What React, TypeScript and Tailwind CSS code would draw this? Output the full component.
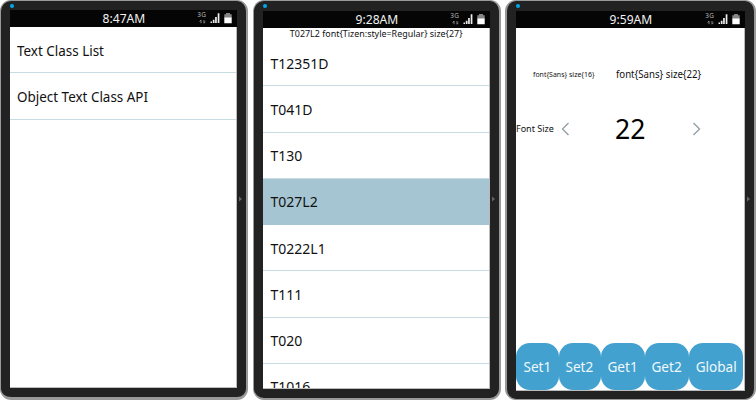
import type { ReactNode } from 'react';

function StatusBar({ time }: { time: string }) {
  return (
    <div className="relative flex h-[17px] shrink-0 items-center justify-center bg-[#050505] text-[#f2f2f2]">
      <span className="text-[13px] leading-[17px]"><span className="inline-block origin-center scale-x-[0.93]">{time}</span></span>
      <svg className="absolute top-0 right-0" width="42" height="17" viewBox="0 0 42 17">
        <text x="2.2" y="7.4" fontSize="6.4" letterSpacing="0.4" fill="#b8b8b8">3G</text>
        <path d="M6 10v3.200M4.600 11.500L6 10M9 10v3.200M10.400 11.700L9 13.200" stroke="#888" strokeWidth="1" fill="none" />
        <path d="M15.500 11.500h1.500V13h-1.500zM17.800 9.800h1.700V13h-1.700zM20.100 7h1.700v6h-1.700zM22.700 3.200h1.700V13h-1.700z" fill="#eee" />
        <path d="M31 3h4v1.200h1.700V8h-7.400V4.200H31z" fill="#858585" />
        <path d="M29.300 7.500h7.400v5.800h-7.400z" fill="#fff" />
      </svg>
    </div>
  );
}

function Phone({ frame, time, children }: { frame: string; time: string; children: ReactNode }) {
  return (
    <section className={`relative flex shrink-0 flex-col overflow-hidden border-[#999] bg-[#222] ${frame}`}>
      <i className="absolute top-[3px] left-[9px] size-1 rounded-full bg-[#00a8ed]" />
      <StatusBar time={time} />
      <div className="flex min-h-0 flex-1 flex-col overflow-hidden border-r border-b border-[#bbb] bg-white">{children}</div>
      <svg className="absolute top-[194px] right-[3px]" width="4" height="8" viewBox="0 0 4 8">
        <path d="M0 1.500L3 4L0 6.500z" fill="#666" />
      </svg>
    </section>
  );
}

function Row({ label, selected = false, fit }: { label: string; selected?: boolean; fit: string }) {
  return (
    <div className={`flex h-[46.25px] shrink-0 items-center border-b pt-px ${selected ? 'border-[#a6c5d2] bg-[#a6c5d2]' : 'border-[#c8dbe3]'}`}>
      <span className={`origin-left text-[14px] whitespace-nowrap ${fit}`}>{label}</span>
    </div>
  );
}

const devices = ['T12351D', 'T041D', 'T130', 'T027L2', 'T0222L1', 'T111', 'T020', 'T1016'];

const buttons = [
  { label: 'Set1', width: 'w-[42.500px]' },
  { label: 'Set2', width: 'w-[42.500px]' },
  { label: 'Get1', width: 'w-[44px]' },
  { label: 'Get2', width: 'w-[44px]' },
  { label: 'Global', width: 'w-[54px]' },
];

export default function App() {
  return (
    <main className="flex h-[400px] w-[756px] items-start overflow-hidden bg-white font-['Noto_Sans',sans-serif] text-[#111]">
      <Phone time="8:47AM" frame="h-[400px] w-[248px] rounded-[11px] border-t border-l border-r-2 border-b-[3px] pt-[9px] pr-[9px] pb-[9px] pl-[9px]">
        <Row label="Text Class List" fit="ml-[7px] scale-x-[0.96]" />
        <Row label="Object Text Class API" fit="ml-[7px] scale-x-[0.96]" />
      </Phone>
      <Phone time="9:28AM" frame="ml-[5px] h-[400px] w-[248px] rounded-[11px] border-t border-l border-r-2 border-b-[2px] pt-[10px] pr-[9px] pb-[9px] pl-[9px]">
        <div className="flex h-[12px] shrink-0 items-center justify-center text-[9px] whitespace-nowrap">
          <span className="scale-x-[0.99]">T027L2 font{'{'}Tizen:style=Regular{'}'} size{'{'}27{'}'}</span>
        </div>
        {devices.map((name) => <Row key={name} label={name} selected={name === 'T027L2'} fit="ml-[7.500px]" />)}
      </Phone>
      <Phone time="9:59AM" frame="ml-[4px] h-[400px] w-[251px] rounded-[11px] border-t border-l-2 border-r-2 border-b pt-[10px] pr-[9px] pb-[8px] pl-[9px]">
        <div className="mt-[36px] flex h-5 items-center whitespace-nowrap">
          <span className="ml-[17px] w-[83px] origin-left scale-x-[0.93] pt-px text-[7.500px]">font{'{'}Sans{'}'} size{'{'}16{'}'}</span>
          <span className="origin-left scale-x-[0.965] pt-px text-[10px]">font{'{'}Sans{'}'} size{'{'}22{'}'}</span>
        </div>
        <div className="mt-[27px] flex h-[36px] items-center">
          <span className="w-[44px] text-[9px] whitespace-nowrap">Font Size</span>
          <svg width="10" height="14" viewBox="0 0 10 14"><path d="M8.500 1L2.500 7l6 6" fill="none" stroke="#93a1a5" strokeWidth="1.400" /></svg>
          <span className="ml-[44.500px] w-[32px] origin-left scale-x-[0.95] -translate-y-px text-[28px] text-black">22</span>
          <svg className="ml-[44.500px]" width="10" height="14" viewBox="0 0 10 14"><path d="M2.500 1l6 6-6 6" fill="none" stroke="#93a1a5" strokeWidth="1.400" /></svg>
        </div>
        <div className="mt-auto flex h-[47px]">
          {buttons.map(({ label, width }) => (
            <button key={label} className={`flex shrink-0 items-center justify-center rounded-[14px] bg-[#42a1cf] text-[14px] text-[#f0f8fc] ${width}`}>
              <span className="scale-x-[0.97]">{label}</span>
            </button>
          ))}
        </div>
      </Phone>
    </main>
  );
}
